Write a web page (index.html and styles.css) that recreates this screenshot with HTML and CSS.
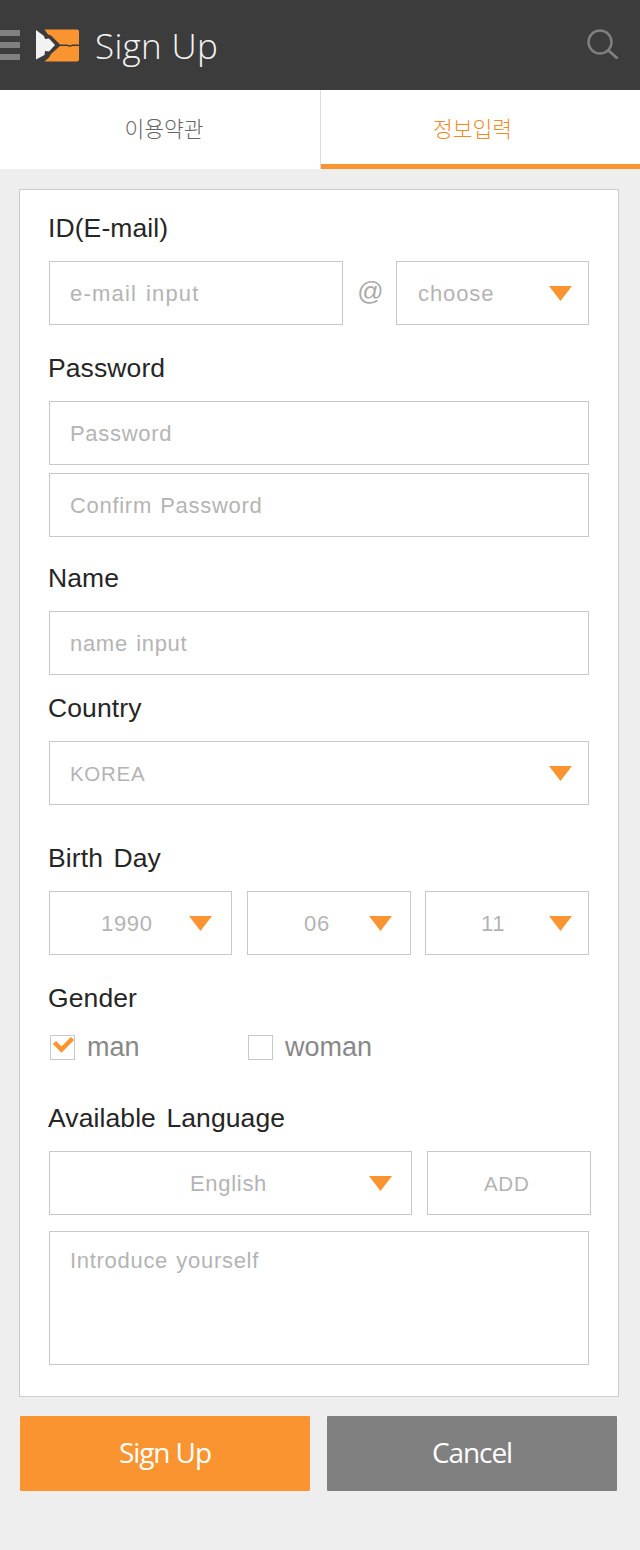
FILE: index.html
```html
<!DOCTYPE html>
<html lang="ko">
<head>
<meta charset="utf-8">
<title>Sign Up</title>
<link rel="stylesheet" href="styles.css">
</head>
<body>
<header class="topbar">
  <div class="burger"><span></span><span></span><span></span></div>
  <svg class="logo" width="44" height="34" viewBox="0 0 44 34">
    <path fill="#f99430" d="M8.5 .5H41a2 2 0 0 1 2 2V15.500H36L34 16.500L31 15.500H24L15 6.500L12 5.500Z"/>
    <path fill="#f99430" d="M24 17H31L34 18L36 17H43V30.500a2 2 0 0 1-2 2H8.500L13 28.500L15 25Z"/>
    <path fill="#f2f2f2" d="M0 1L8 7L9 10L13 9.500L19 16L13 22.500L9 22L8.500 26L0 30.500Z"/>
  </svg>
  <h1 class="title">Sign Up</h1>
  <svg class="search" width="32" height="32" viewBox="0 0 32 32" fill="none" stroke="#7f7f7f" stroke-width="2.500">
    <circle cx="13" cy="13" r="11.500"/>
    <path d="M21.500 21.500L30.500 29.500" stroke-width="3"/>
  </svg>
</header>
<nav class="tabs">
  <div class="tab">이용약관</div>
  <div class="tab tab-active">정보입력</div>
</nav>
<main class="page">
  <form class="card">
    <div class="label">ID(E-mail)</div>
    <div class="row">
      <div class="field field-email">e-mail input</div>
      <span class="at">@</span>
      <div class="field field-domain"><span class="value">choose</span><svg class="arrow" width="23" height="15" viewBox="0 0 23 15"><path d="M0 0H23L11.500 15Z"/></svg></div>
    </div>
    <div class="label gap-23">Password</div>
    <div class="field">Password</div>
    <div class="field stack">Confirm Password</div>
    <div class="label gap-21">Name</div>
    <div class="field">name input</div>
    <div class="label gap-13">Country</div>
    <div class="field field-caps"><span class="value">KOREA</span><svg class="arrow" width="23" height="15" viewBox="0 0 23 15"><path d="M0 0H23L11.500 15Z"/></svg></div>
    <div class="label gap-33">Birth Day</div>
    <div class="row">
      <div class="field field-year"><span class="value">1990</span><svg class="arrow" width="23" height="15" viewBox="0 0 23 15"><path d="M0 0H23L11.500 15Z"/></svg></div>
      <div class="field field-month"><span class="value">06</span><svg class="arrow" width="23" height="15" viewBox="0 0 23 15"><path d="M0 0H23L11.500 15Z"/></svg></div>
      <div class="field field-day"><span class="value">11</span><svg class="arrow" width="23" height="15" viewBox="0 0 23 15"><path d="M0 0H23L11.500 15Z"/></svg></div>
    </div>
    <div class="label gap-23">Gender</div>
    <div class="checks">
      <div class="check check-man">
        <span class="box"><svg class="tick" width="26" height="24" viewBox="0 0 26 24"><path d="M4.500 10.500L11.500 17.500L22.500 6.500" fill="none" stroke="#f99430" stroke-width="4.500"/></svg></span>man
      </div>
      <div class="check"><span class="box"></span>woman</div>
    </div>
    <div class="label gap-38">Available Language</div>
    <div class="row lang-row">
      <div class="field field-lang"><span class="value">English</span><svg class="arrow" width="23" height="15" viewBox="0 0 23 15"><path d="M0 0H23L11.500 15Z"/></svg></div>
      <div class="field field-add field-caps">ADD</div>
    </div>
    <div class="field field-text">Introduce yourself</div>
  </form>
  <div class="actions">
    <button class="btn btn-primary" type="button">Sign Up</button>
    <button class="btn btn-muted" type="button">Cancel</button>
  </div>
</main>
</body>
</html>
```

FILE: styles.css
```css
* { box-sizing: border-box; }
html, body { margin: 0; padding: 0; }
body {
  background: #eeeeee;
  font-family: "Liberation Sans", Arial, "Noto Sans CJK KR", sans-serif;
  height: 1550px;
  overflow: hidden;
}
.topbar {
  height: 90px;
  background: #3c3c3c;
  display: flex;
  align-items: center;
}
.burger {
  width: 20px;
  height: 30px;
  margin-right: 16px;
  display: flex;
  flex-direction: column;
  justify-content: space-between;
}
.burger span { display: block; height: 6px; background: #808080; }
.logo { flex: none; margin-top: 2px; }
.title {
  margin: 0 0 0 15px;
  font: 300 35px/1 "Open Sans", sans-serif;
  letter-spacing: .3px;
  color: #f4f4f4;
  flex: 1;
}
.search { flex: none; margin: 0 21px 1px 0; }
.tabs { display: flex; height: 79px; background: #fff; }
.tab {
  width: 320px;
  padding-left: 8px;
  text-align: center;
  font: 300 21.500px/75px "Noto Sans CJK KR", sans-serif;
  color: #666;
}
.tab-active {
  border-left: 1px solid #ddd;
  color: #f28a24;
  padding-right: 16px;
  padding-left: 0;
  background: linear-gradient(#f99430, #f99430) bottom / 100% 5px no-repeat;
}
.page { padding: 20px 19px 0; }
.card {
  width: 600px;
  height: 1208px;
  background: #fff;
  border: 1px solid #ccc;
  padding: 18px 29px 0;
}
.label {
  height: 40px;
  margin: 0 0 13px -1px;
  font-size: 26.500px;
  line-height: 40px;
  letter-spacing: .1px;
  word-spacing: 3px;
  color: #262626;
}
.gap-13 { margin-top: 13px; }
.gap-21 { margin-top: 21px; }
.gap-23 { margin-top: 23px; }
.gap-33 { margin-top: 33px; }
.gap-38 { margin-top: 38px; }
.row { display: flex; align-items: center; }
.field {
  height: 64px;
  border: 1px solid #c8c8c8;
  padding: 2px 0 0 20px;
  display: flex;
  align-items: center;
  font-size: 22px;
  letter-spacing: .7px;
  word-spacing: 1.500px;
  color: #b4b4b4;
  background: #fff;
}
.field-caps { font-size: 20.500px; }
.stack { margin-top: 8px; }
.value { flex: 1; }
.arrow { flex: none; margin: -1px 16px 0 0; }
.arrow path { fill: #f99430; }
.field-email { width: 294px; letter-spacing: 1.200px; }
.at {
  width: 55px;
  text-align: center;
  font-size: 26px;
  color: #aaa;
  margin: -4px -2px 0 0;
}
.field-domain { width: 193px; letter-spacing: .9px; padding-left: 21px; }
.field-year { width: 183px; padding-left: 51px; }
.field-year .arrow, .field-lang .arrow { margin-right: 19px; }
.field-month { width: 164px; margin-left: 15px; padding-left: 56px; }
.field-month .arrow { margin-right: 18px; }
.field-day { width: 164px; margin-left: 14px; padding-left: 55px; }
.checks { display: flex; height: 25px; margin-top: 17px; }
.check {
  width: 198px;
  display: flex;
  align-items: center;
  font-size: 27px;
  color: #888;
  margin-left: 1px;
  line-height: 27px;
}
.check-man { margin-right: -1px; }
.box {
  width: 25px;
  height: 25px;
  border: 1px solid #c8c8c8;
  margin-right: 12px;
  position: relative;
  flex: none;
}
.tick { position: absolute; left: -1px; top: -4px; }
.field-lang { width: 363px; padding-left: 140px; }
.field-add { width: 164px; margin-left: 15px; padding-left: 56px; margin-right: -2px; flex: none; }
.field-text {
  height: 134px;
  margin-top: 16px;
  align-items: flex-start;
  padding-top: 15px;
  line-height: 28px;
}
.actions { display: flex; gap: 17px; margin: 19px 0 0 1px; }
.btn {
  width: 290px;
  height: 75px;
  border: 0;
  border-radius: 1px;
  color: #fff;
  font: 400 28px/1 "Open Sans", sans-serif;
  letter-spacing: -1.100px;
  padding: 0 0 3px;
}
.btn-primary { background: #f99430; }
.btn-muted { background: #808080; }
```
